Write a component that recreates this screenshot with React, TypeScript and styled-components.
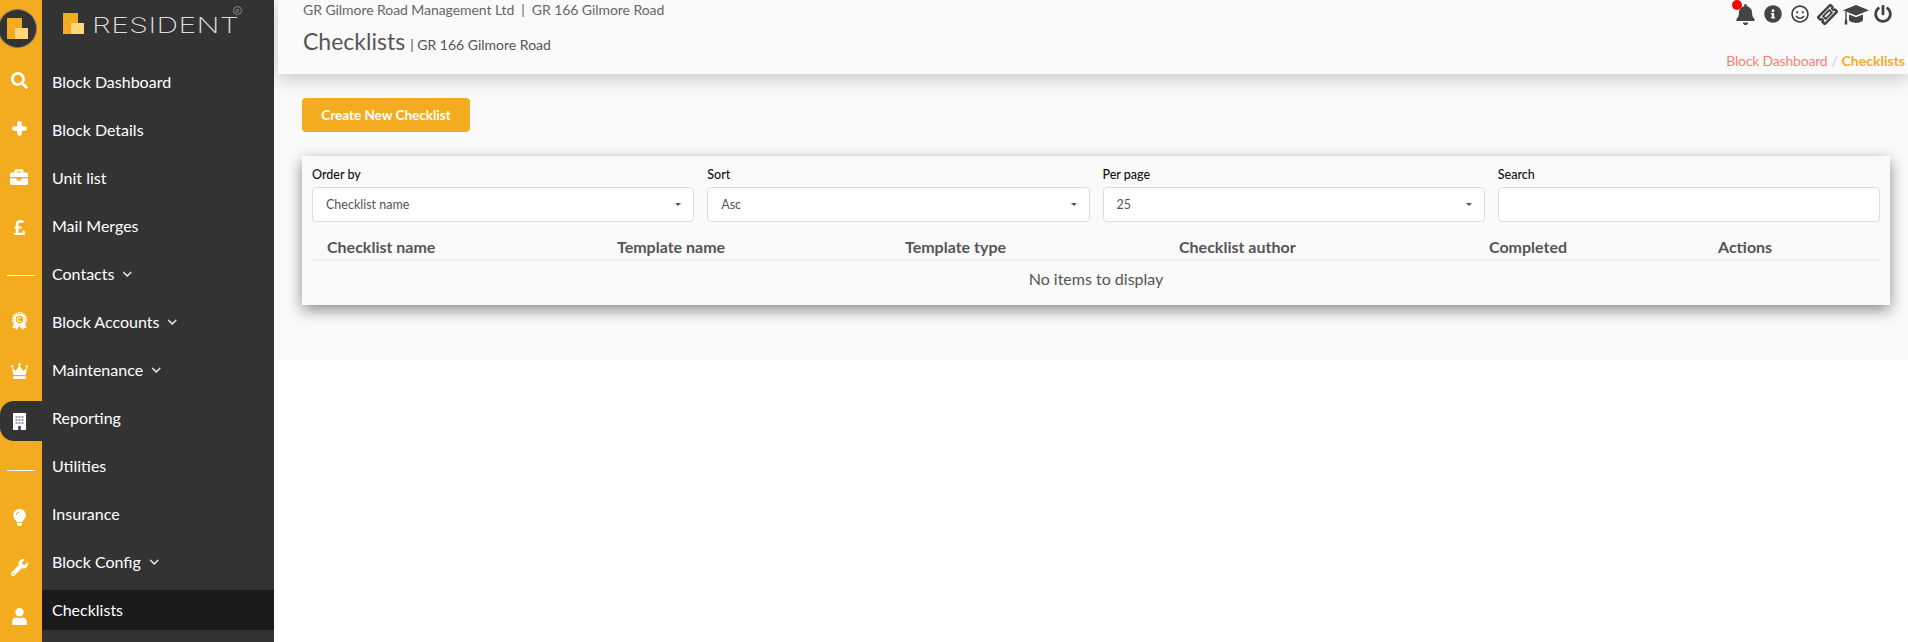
import React from 'react';
import styled, { createGlobalStyle } from 'styled-components';
import {
  FaSearch,
  FaBriefcase,
  FaPoundSign,
  FaWrench,
  FaUser,
  FaBell,
  FaInfoCircle,
  FaRegSmile,
  FaPowerOff,
  FaChevronDown,
} from 'react-icons/fa';

const GlobalStyle = createGlobalStyle`
  html, body {
    margin: 0;
    padding: 0;
    background: #fff;
    font-family: Lato, "Open Sans", sans-serif;
    overflow: hidden;
  }
  * {
    box-sizing: border-box;
  }
`;

const Page = styled.div`
  display: flex;
  width: 1908px;
  height: 642px;
  overflow: hidden;
`;

const Rail = styled.aside`
  width: 42px;
  flex: none;
  background: #f3ac1f;
  padding-top: 9px;
  display: flex;
  flex-direction: column;
`;

const RailLogo = styled.div`
  width: 39px;
  height: 39px;
  margin: 0 0 8.65px -2px;
  border-radius: 50%;
  background: #333;
  border: 1px solid #777;
  display: flex;
  align-items: center;
  justify-content: center;
`;

const RailItem = styled.div<{ $active?: boolean; $lift?: number }>`
  height: 48.7px;
  flex: none;
  display: flex;
  align-items: center;
  justify-content: center;
  padding-right: 4px;
  padding-bottom: ${(p) => p.$lift || 0}px;
  color: #fff;
  font-size: 17px;
  position: relative;

  ${(p) =>
    p.$active &&
    `
    &::before {
      content: '';
      position: absolute;
      left: 0;
      right: 0;
      top: 4px;
      height: 40px;
      background: #333;
      border-radius: 14px 0 0 14px;
    }
    svg { position: relative; }
  `}
`;

const RailRule = styled.hr`
  width: 28px;
  height: 1px;
  margin: 0 0 0 4px;
  border: 0;
  background: #fff;
`;

const Sidebar = styled.nav`
  width: 232px;
  flex: none;
  background: #333;
  display: flex;
  flex-direction: column;
`;

const Brand = styled.div`
  height: 62px;
  flex: none;
  padding: 13px 0 0 21px;
  position: relative;
  display: flex;
  align-items: flex-start;
  gap: 8px;
`;

const BrandName = styled.span`
  margin-top: 2px;
  font-family: Inter, sans-serif;
  font-weight: 200;
  font-size: 21px;
  line-height: 21px;
  letter-spacing: 0.3px;
  color: #dedede;
  display: inline-block;
  transform: scaleX(1.43);
  transform-origin: left center;
`;

const BrandMark = styled.span`
  position: absolute;
  left: 191px;
  top: 6px;
  width: 9px;
  height: 9px;
  border-radius: 50%;
  border: 1px solid #888;
  color: #888;
  font-size: 6px;
  line-height: 7px;
  text-align: center;
  font-family: Lato, sans-serif;
`;

const MenuList = styled.ul`
  list-style: none;
  margin: 0;
  padding: 0;
  display: flex;
  flex-direction: column;
  gap: 8px;
`;

const MenuItem = styled.li<{ $current?: boolean }>`
  height: 40px;
  display: flex;
  align-items: center;
  gap: 8px;
  padding: 0 0 2px 10px;
  color: #fff;
  font-size: 16px;
  background: ${(p) => (p.$current ? '#1b1b1b' : 'transparent')};

  svg {
    font-size: 10.5px;
    color: #ddd;
    margin-top: 2px;
  }
`;

const Main = styled.main`
  flex: 1;
  min-width: 0;
`;

const Content = styled.div`
  height: 361px;
  background: #fafafa;
`;

const Header = styled.header`
  height: 74px;
  margin-left: 4px;
  padding: 0 3px 0 25px;
  background: #fafafa;
  box-shadow: 0 4px 18px rgba(0, 0, 0, 0.22);
  display: flex;
  justify-content: space-between;
`;

const Crumbs = styled.div`
  font-size: 14px;
  line-height: 20px;
  letter-spacing: -0.06px;
  color: #666;
`;

const TitleRow = styled.div`
  margin-top: 5px;
  display: flex;
  align-items: baseline;
  color: #555;
  font-size: 14px;
`;

const Title = styled.h1`
  margin: 0 5px 0 0;
  font-size: 23px;
  line-height: 32px;
  font-weight: 400;
  color: #555;
`;

const HeaderRight = styled.div`
  display: flex;
  flex-direction: column;
  align-items: flex-end;
`;

const IconBar = styled.div`
  display: flex;
  align-items: center;
  height: 28px;
  padding-right: 13px;
  color: #444;
  font-size: 18px;
`;

const IconSlot = styled.span<{ $gap?: number }>`
  display: flex;
  margin-left: ${(p) => p.$gap || 0}px;
`;

const BellWrap = styled.span`
  position: relative;
  display: flex;
  font-size: 21px;
`;

const Dot = styled.span`
  position: absolute;
  left: -3px;
  top: -4px;
  width: 10px;
  height: 10px;
  border-radius: 50%;
  background: #f00;
`;

const Breadcrumb = styled.div`
  margin-top: 23px;
  font-size: 14px;
  line-height: 20px;
  letter-spacing: -0.2px;
  color: #f97f72;

  span {
    color: #ccc;
    margin: 0 4px;
  }

  b {
    color: #f3ac1f;
    font-weight: 700;
    letter-spacing: 0;
  }
`;

const Body = styled.div`
  padding: 24px 18px 0 28px;
`;

const CreateButton = styled.button`
  width: 168px;
  height: 34px;
  border: 0;
  border-radius: 4px;
  background: #f3ac1f;
  color: #fff;
  font-family: inherit;
  font-size: 13.5px;
  font-weight: 700;
  padding: 0;
`;

const Card = styled.section`
  margin-top: 24px;
  height: 149px;
  padding: 10px 10px 0;
  background: #fafafa;
  box-shadow: 0 5px 14px rgba(0, 0, 0, 0.45);
`;

const Filters = styled.div`
  display: grid;
  grid-template-columns: repeat(4, 1fr);
  column-gap: 13px;
`;

const FieldLabel = styled.label`
  display: block;
  height: 21px;
  font-size: 12.5px;
  line-height: 17px;
  font-weight: 500;
  color: #111;
`;

const SelectBox = styled.div`
  height: 35px;
  padding: 0 13px;
  background: #fff;
  border: 1px solid #ddd;
  border-radius: 4px;
  display: flex;
  align-items: center;
  justify-content: space-between;
  font-size: 12.5px;
  color: #555;

  &::after {
    content: '';
    border: 3.5px solid transparent;
    border-top-color: #555;
    border-bottom-width: 0;
    margin-right: -1px;
  }
`;

const SearchBox = styled.div`
  height: 35px;
  background: #fff;
  border: 1px solid #ddd;
  border-radius: 4px;
`;

const Table = styled.div`
  margin-top: 15px;
`;

const TableHead = styled.div`
  display: grid;
  grid-template-columns: 290px 288px 274px 310px 229px 177px;
  height: 24px;
  border-bottom: 2px solid #eee;
`;

const HeadCell = styled.div`
  padding-left: 15px;
  font-size: 16px;
  line-height: 20px;
  font-weight: 700;
  color: #555;
`;

const EmptyRow = styled.div`
  height: 36px;
  line-height: 36px;
  text-align: center;
  font-size: 16px;
  color: #555;
`;

const LogoMark = ({ size }: { size: number }) => (
  <svg width={size} height={size} viewBox="0 0 21 21">
    <path d="M0 0h15v21H0z" fill="#f3ac1f" />
    <path d="M8 10h13v11H8z" fill="#ffd678" />
  </svg>
);

const PlusIcon = () => (
  <svg width="15" height="15" viewBox="0 0 15 15" fill="none" stroke="#fff" strokeWidth="4.6" strokeLinecap="round">
    <path d="M7.5 2.4v10.2M2.4 7.5h10.2" />
  </svg>
);

const RosetteIcon = () => (
  <svg width="17" height="19" viewBox="0 0 18 20" fill="#fff">
    <path d="M4 12 1 17l3-.4L6 19l3-5zM14 12l3 5-3-.4-2 2.4-3-5z" />
    <circle cx="9" cy="8" r="6.6" />
    <circle cx="9" cy="8" r="7.4" fill="none" strokeDasharray="2 1" stroke="#fff" strokeWidth="1.4" />
    <circle cx="9" cy="8" r="4" fill="#f3ac1f" />
    <path d="M10.6 6.6a2.2 2.2 0 1 0 0 2.8" fill="none" stroke="#fff" strokeWidth="1.1" />
  </svg>
);

const CrownIcon = () => (
  <svg width="17" height="16" viewBox="0 0 17 16" fill="#fff">
    <path d="M1 4.5 4.6 8 8.5 2.5 12.4 8 16 4.5 14.8 12H2.2z" />
    <circle cx="1.2" cy="3.4" r="1.2" />
    <circle cx="8.5" cy="1.4" r="1.3" />
    <circle cx="15.8" cy="3.4" r="1.2" />
    <path d="M2.2 13.2h12.6V16H2.2z" />
  </svg>
);

const BuildingIcon = () => (
  <svg width="13" height="17" viewBox="0 0 13 17">
    <path d="M0 0h13v17H0z" fill="#fff" />
    <g fill="#a0a0ae">
      <path d="M2.5 3h2v2h-2zM5.5 3h2v2h-2zM8.5 3h2v2h-2z" />
      <path d="M2.5 6h2v2h-2zM5.5 6h2v2h-2zM8.5 6h2v2h-2z" />
      <path d="M2.5 9h2v2h-2zM5.5 9h2v2h-2zM8.5 9h2v2h-2z" />
    </g>
    <path d="M5.2 13h2.6v4H5.2z" fill="#3a3a70" />
  </svg>
);

const BulbIcon = () => (
  <svg width="13" height="17" viewBox="0 0 13 17" fill="#fff">
    <path d="M6.5 0a6.3 6.3 0 0 1 4.2 11c-.8.8-1.2 1.4-1.4 2.2H3.7c-.2-.8-.6-1.4-1.4-2.2A6.3 6.3 0 0 1 6.5 0z" />
    <path d="M4 14h5v1.2c0 .8-1 1.8-2.5 1.8S4 16 4 15.2z" />
    <path d="M3.2 6.2a3.2 3.2 0 0 1 3-3" fill="none" stroke="#f3ac1f" strokeWidth="1" />
  </svg>
);

const TicketIcon = () => (
  <svg width="21" height="21" viewBox="0 0 24 24" fill="none" stroke="#444">
    <g transform="rotate(-45 12 12)">
      <path
        d="M2 6.5h20v3.7a1.8 1.8 0 0 0 0 3.6v3.7H2v-3.7a1.8 1.8 0 0 0 0-3.6z"
        strokeWidth="2.8"
        strokeLinejoin="round"
      />
      <path d="M7 10h10v4H7z" strokeWidth="2.2" />
    </g>
  </svg>
);

const CapIcon = () => (
  <svg width="26" height="21" viewBox="0 0 26 21" fill="#444">
    <path d="M13 1 26 6.2 13 11.5 0 6.2z" />
    <path d="M6 10.4v5.2c0 2 3.6 3.4 7 3.4s7-1.4 7-3.4v-5.2L13 13.2z" />
    <path d="M3 7.5v8.5" stroke="#444" strokeWidth="1.4" />
    <path d="M2 15.5h2l.4 5H1.6z" />
  </svg>
);

const menu = [
  { label: 'Block Dashboard' },
  { label: 'Block Details' },
  { label: 'Unit list' },
  { label: 'Mail Merges' },
  { label: 'Contacts', more: true },
  { label: 'Block Accounts', more: true },
  { label: 'Maintenance', more: true },
  { label: 'Reporting' },
  { label: 'Utilities' },
  { label: 'Insurance' },
  { label: 'Block Config', more: true },
  { label: 'Checklists', current: true },
];

const columns = ['Checklist name', 'Template name', 'Template type', 'Checklist author', 'Completed', 'Actions'];

const filters = [
  { label: 'Order by', value: 'Checklist name' },
  { label: 'Sort', value: 'Asc' },
  { label: 'Per page', value: '25' },
];

export default function App() {
  return (
    <>
      <GlobalStyle />
      <Page>
        <Rail>
          <RailLogo>
            <LogoMark size={21} />
          </RailLogo>
          <RailItem><FaSearch /></RailItem>
          <RailItem $lift={3}><PlusIcon /></RailItem>
          <RailItem $lift={3}><FaBriefcase size={18} /></RailItem>
          <RailItem><FaPoundSign /></RailItem>
          <RailItem><RailRule /></RailItem>
          <RailItem $lift={6}><RosetteIcon /></RailItem>
          <RailItem $lift={5}><CrownIcon /></RailItem>
          <RailItem $active><BuildingIcon /></RailItem>
          <RailItem><RailRule /></RailItem>
          <RailItem $lift={4}><BulbIcon /></RailItem>
          <RailItem><FaWrench /></RailItem>
          <RailItem><FaUser /></RailItem>
        </Rail>
        <Sidebar>
          <Brand>
            <LogoMark size={21} />
            <BrandName>RESIDENT</BrandName>
            <BrandMark>R</BrandMark>
          </Brand>
          <MenuList>
            {menu.map((item) => (
              <MenuItem key={item.label} $current={item.current}>
                {item.label}
                {item.more ? <FaChevronDown /> : null}
              </MenuItem>
            ))}
          </MenuList>
        </Sidebar>
        <Main>
          <Content>
            <Header>
              <div>
                <Crumbs>GR Gilmore Road Management Ltd&nbsp; |&nbsp; GR 166 Gilmore Road</Crumbs>
                <TitleRow>
                  <Title>Checklists</Title> | GR 166 Gilmore Road
                </TitleRow>
              </div>
              <HeaderRight>
                <IconBar>
                  <BellWrap>
                    <FaBell />
                    <Dot />
                  </BellWrap>
                  <IconSlot $gap={8}><FaInfoCircle /></IconSlot>
                  <IconSlot $gap={9}><FaRegSmile /></IconSlot>
                  <IconSlot $gap={8}><TicketIcon /></IconSlot>
                  <IconSlot $gap={5}><CapIcon /></IconSlot>
                  <IconSlot $gap={5}><FaPowerOff /></IconSlot>
                </IconBar>
                <Breadcrumb>
                  Block Dashboard<span>/</span><b>Checklists</b>
                </Breadcrumb>
              </HeaderRight>
            </Header>
            <Body>
              <CreateButton>Create New Checklist</CreateButton>
              <Card>
                <Filters>
                  {filters.map((f) => (
                    <div key={f.label}>
                      <FieldLabel>{f.label}</FieldLabel>
                      <SelectBox>{f.value}</SelectBox>
                    </div>
                  ))}
                  <div>
                    <FieldLabel>Search</FieldLabel>
                    <SearchBox />
                  </div>
                </Filters>
                <Table>
                  <TableHead>
                    {columns.map((c) => (
                      <HeadCell key={c}>{c}</HeadCell>
                    ))}
                  </TableHead>
                  <EmptyRow>No items to display</EmptyRow>
                </Table>
              </Card>
            </Body>
          </Content>
        </Main>
      </Page>
    </>
  );
}
